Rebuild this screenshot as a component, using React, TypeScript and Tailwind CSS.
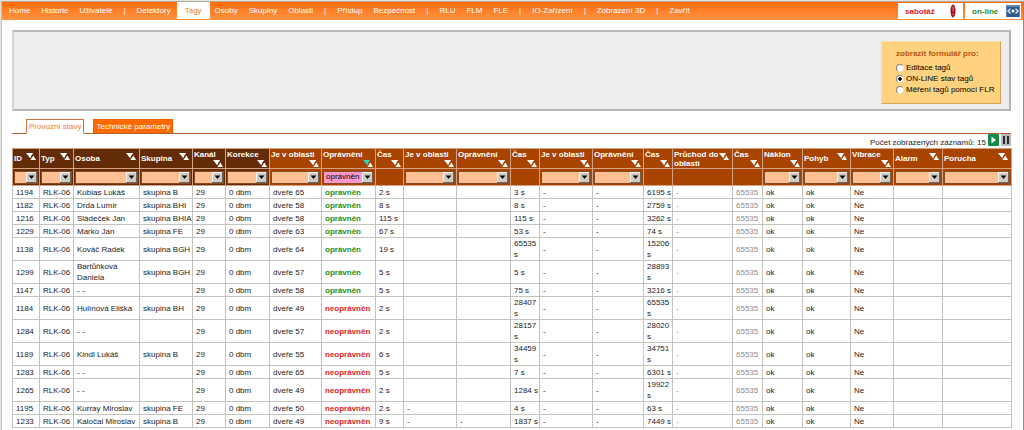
import React, { useState } from 'react';
import clsx from 'clsx';


type Column = {
  label: string;
  width: string;
  dark?: boolean;
  filter?: boolean;
  inline?: boolean;
  active?: boolean;
}

type MenuItem = {
  label: string;
  active?: boolean;
}


const menu: MenuItem[] = [
  { label: 'Home' },
  { label: 'Historie' },
  { label: 'Uživatelé' },
  { label: '|' },
  { label: 'Detektory' },
  { label: 'Tagy', active: true },
  { label: 'Osoby' },
  { label: 'Skupiny' },
  { label: 'Oblasti' },
  { label: '|' },
  { label: 'Přístup' },
  { label: 'Bezpečnost' },
  { label: '|' },
  { label: 'RLU' },
  { label: 'FLM' },
  { label: 'FLE' },
  { label: '|' },
  { label: 'IO-Zařízení' },
  { label: '|' },
  { label: 'Zobrazení 3D' },
  { label: '|' },
  { label: 'Zavřít' },
];


const columns: Column[] = [
  { label: 'ID', width: 'w-[27px]', dark: true, filter: true, inline: true },
  { label: 'Typ', width: 'w-[34px]', dark: true, filter: true, inline: true },
  { label: 'Osoba', width: 'w-[66px]', dark: true, filter: true, inline: true },
  { label: 'Skupina', width: 'w-[53px]', dark: true, filter: true, inline: true },
  { label: 'Kanál', width: 'w-[33px]', dark: true, filter: true },
  { label: 'Korekce', width: 'w-[44px]', dark: true, filter: true },
  { label: 'Je v oblasti', width: 'w-[52px]', filter: true },
  { label: 'Oprávnění', width: 'w-[54px]', filter: true, active: true },
  { label: 'Čas', width: 'w-[28px]' },
  { label: 'Je v oblasti', width: 'w-[53px]', filter: true },
  { label: 'Oprávnění', width: 'w-[54px]', filter: true },
  { label: 'Čas', width: 'w-[29px]' },
  { label: 'Je v oblasti', width: 'w-[53px]', filter: true },
  { label: 'Oprávnění', width: 'w-[51px]', filter: true },
  { label: 'Čas', width: 'w-[29px]' },
  { label: 'Průchod do oblasti', width: 'w-[60px]', inline: true },
  { label: 'Čas', width: 'w-[30px]' },
  { label: 'Náklon', width: 'w-[40px]', filter: true },
  { label: 'Pohyb', width: 'w-[48px]', filter: true, inline: true },
  { label: 'Vibrace', width: 'w-[43px]', filter: true },
  { label: 'Alarm', width: 'w-[49px]', filter: true, inline: true },
  { label: 'Porucha', width: 'w-[69px]', filter: true, inline: true },
];


// id, person, group, door, allowed, time 1, area 2, permission 2, time 2, time 3
type Tag = [string, string, string, string, boolean, string, string, string, string, string];

const tags: Tag[] = [
  ['1194', 'Kubias Lukáš', 'skupina B', 'dveře 65', true, '2 s', '', '', '3 s', '6195 s'],
  ['1182', 'Drda Lumír', 'skupina BHI', 'dveře 58', true, '8 s', '', '', '8 s', '2759 s'],
  ['1216', 'Sládeček Jan', 'skupina BHIA', 'dveře 58', true, '115 s', '', '', '115 s', '3262 s'],
  ['1229', 'Marko Jan', 'skupina FE', 'dveře 63', true, '67 s', '', '', '53 s', '74 s'],
  ['1138', 'Kováč Radek', 'skupina BGH', 'dveře 64', true, '19 s', '', '', '65535 s', '15206 s'],
  ['1299', 'Bartůňková Daniela', 'skupina BGH', 'dveře 57', true, '5 s', '', '', '5 s', '28893 s'],
  ['1147', '- -', '', 'dveře 58', true, '5 s', '', '', '75 s', '3216 s'],
  ['1184', 'Hulínová Eliška', 'skupina BH', 'dveře 49', false, '2 s', '', '', '28407 s', '65535 s'],
  ['1284', '- -', '', 'dveře 57', false, '2 s', '', '', '28157 s', '28020 s'],
  ['1189', 'Kindl Lukáš', 'skupina B', 'dveře 55', false, '6 s', '', '', '34459 s', '34751 s'],
  ['1283', '- -', '', 'dveře 65', false, '5 s', '', '', '7 s', '6301 s'],
  ['1265', '- -', '', 'dveře 49', false, '2 s', '', '', '1284 s', '19922 s'],
  ['1195', 'Kurray Miroslav', 'skupina FE', 'dveře 50', false, '2 s', '-', '', '4 s', '63 s'],
  ['1233', 'Kaločai Miroslav', 'skupina B', 'dveře 49', false, '9 s', '-', '-', '1837 s', '7449 s'],
];

const forms = ['Editace tagů', 'ON-LINE stav tagů', 'Měření tagů pomocí FLR'];


const toCells = ([id, person, group, door, allowed, time1, area2, perm2, time2, time3]: Tag) => [
  id, 'RLK-06', person, group, '29', '0 dbm', door, allowed ? 'oprávněn' : 'neoprávněn',
  time1, area2, perm2, time2, '-', '-', time3, '-', '65535', 'ok', 'ok', 'Ne', '', '',
];


const SortButton: React.FC<{ label: string; active?: boolean }> = ({ label, active }) => (
  <button type="button" aria-label={`Seřadit: ${label}`} className="shrink-0 self-center">
    <svg viewBox="0 0 10 7" className="block w-[10px] h-[7px]">
      <path d="M0 0h7.2L5.4 2.6 4.2 5.2z" fill={active ? '#35d0b8' : '#fff'} />
      <path d="M10 7H4.4l3-4.4z" fill="#fff" />
    </svg>
  </button>
);


const FilterSelect: React.FC<{ label: string; active?: boolean }> = ({ label, active }) => (
  <div className="grid">
    <select
      aria-label={`Filtr: ${label}`}
      defaultValue={active ? 'oprávněn' : ''}
      className={clsx(
        'col-start-1 row-start-1 w-full h-[13px] appearance-none border border-[#8a4a20] pl-[2px] text-[8px] leading-[10px] font-normal text-black',
        active ? 'bg-[#ff99cc]' : 'bg-[#ffbf94]'
      )}
    >
      <option value=""></option>
      {active && <option value="oprávněn">oprávněn</option>}
      {active && <option value="neoprávněn">neoprávněn</option>}
    </select>
    <svg viewBox="0 0 11 11" className="col-start-1 row-start-1 justify-self-end self-center mr-px w-[11px] h-[11px] pointer-events-none">
      <path d="M0 0h11v11H0z" fill="#6b6760" />
      <path d="M0 0h10v10H0z" fill="#f4f2ec" />
      <path d="M1 1h9v9H1z" fill="#d0ccc3" />
      <path d="M2.6 3.6h5.8L5.5 7z" fill="#000" />
    </svg>
  </div>
);


const TopBar: React.FC = () => (
  <header className="flex items-stretch justify-between h-[18px] bg-gradient-to-b from-[#ff6a00] to-[#ff9440]">
    <nav className="flex items-stretch pl-[2px]">
      {menu.map((item, i) =>
        item.label === '|' ? (
          <span key={i} className="pl-[5px] pr-[6px] leading-[17px] text-white">|</span>
        ) : (
          <a
            key={i}
            href="#"
            className={clsx(
              'leading-[17px] mb-px',
              item.active ? 'bg-white text-[#f47a1c] px-2' : 'text-white pl-[5px] pr-[6px]'
            )}
          >
            {item.label}
          </a>
        )
      )}
    </nav>
    <div className="flex gap-[2px] py-px pr-[2px] font-bold">
      <div className="flex items-center justify-between w-[65px] px-[7px] bg-white text-[#e0202c]">
        sabotáž
        <svg viewBox="0 0 6 14" className="w-[6px] h-[14px]">
          <ellipse cx="3" cy="7" rx="2.5" ry="6.5" fill="#a3121c" />
          <path d="M3 2.5v5M3 9.5v1.5" stroke="#e7888c" strokeWidth="1" />
        </svg>
      </div>
      <div className="flex items-center justify-between w-[56px] pl-[7px] pr-px bg-white text-[#1f8f2c]">
        on-line
        <svg viewBox="0 0 14 14" className="w-[14px] h-[14px]">
          <path d="M0 1h14v12H0z" fill="#5f86b4" />
          <path d="M1 3h12v10H1z" fill="#2f5a8c" />
          <path d="M4.5 4.8L2 7l2.5 2.4M9.5 4.8L12 7 9.500 9.400" fill="none" stroke="#dbe8f5" strokeWidth="1.4" />
          <circle cx="7" cy="7" r="1.500" fill="#fff" />
        </svg>
      </div>
    </div>
  </header>
);


const FormPicker: React.FC = () => {
  const [form, setForm] = useState(forms[1]);

  return (
    <section className="flex justify-end h-[81px] pt-[9px] pr-2 bg-[#ededed] border-2 border-t-[#b9b9bd] border-l-[#d5d5d5] border-r-[#b4b4b8] border-b-[#b4b4b8]">
      <fieldset className="w-[120px] h-[63px] pl-[14px] bg-[#ffd27f] border border-[#ffe0a6] border-r-[#d6a75a] border-b-[#d6a75a]">
        <legend className="float-left w-full pt-[7px] pb-[3px] leading-[10px] font-bold text-[#b8560f]">zobrazit formulář pro:</legend>
        {forms.map((name) => (
          <label key={name} className="clear-both flex items-center gap-[2px] h-[11px] text-black whitespace-nowrap">
            <input
              type="radio"
              name="form"
              checked={form === name}
              onChange={() => setForm(name)}
              className="appearance-none size-2 rounded-full bg-white border border-[#8a8376] border-r-[#e8e0d0] border-b-[#e8e0d0] checked:bg-[radial-gradient(circle,#000_35%,#fff_45%)]"
            />
            {name}
          </label>
        ))}
      </fieldset>
    </section>
  );
};


const Tabs: React.FC = () => (
  <div className="flex items-end gap-[9px] h-[15px] pl-[14px] mt-2 border-b border-b-[#b5622c]">
    <button type="button" className="h-[15px] px-[2px] pb-px -mb-px border border-[#c8763c] border-b-white bg-white text-[#f08030]">
      Provozní stavy
    </button>
    <button type="button" className="h-[14px] px-[2px] border border-b-0 border-[#e86000] bg-[#ff6a00] text-white">
      Technické parametry
    </button>
  </div>
);


const TagTable: React.FC = () => (
  <table className="w-full table-fixed border-collapse">
    <colgroup>
      {columns.map((col, i) => (
        <col key={i} className={col.width} />
      ))}
    </colgroup>
    <thead className="text-left font-bold text-white">
      <tr className="h-5">
        {columns.map((col, i) => (
          <th key={i} scope="col" className={clsx('p-0 border border-[#d3a184]', col.dark ? 'bg-[#632b06]' : 'bg-[#a84300]')}>
            <div className={clsx('flex justify-between h-[19px] pl-px', col.inline ? 'items-center pr-[3px]' : 'flex-col pt-px pr-[2px] pb-px')}>
              <span className="leading-[9px]">{col.label}</span>
              <div className={clsx('flex', col.inline ? 'pb-1' : 'justify-end')}>
                <SortButton label={col.label} active={col.active} />
              </div>
            </div>
          </th>
        ))}
      </tr>
      <tr className="h-[17px]">
        {columns.map((col, i) => (
          <td key={i} className={clsx('p-0 px-px border border-[#d3a184]', col.dark ? 'bg-[#632b06]' : 'bg-[#a84300]')}>
            {col.filter && <FilterSelect label={col.label} active={col.active} />}
          </td>
        ))}
      </tr>
    </thead>
    <tbody>
      {tags.map((tag) => (
        <tr key={tag[0]} className="h-[13px]">
          {toCells(tag).map((cell, i) => (
            <td
              key={i}
              className={clsx(
                'p-0 pl-[3px] align-middle border border-[#c4c4be]',
                i === 7 && 'font-bold',
                i === 7 && (tag[4] ? 'text-[#1c8f24]' : 'text-[#e01c28]'),
                (i === 15 || i === 16) && 'text-[#8c8c8c]'
              )}
            >
              {cell}
            </td>
          ))}
        </tr>
      ))}
    </tbody>
  </table>
);


export default function App() {
  return (
    <div className="min-h-screen pt-px pl-px bg-[#e4e2dc] font-['Liberation_Sans',Arial,sans-serif] text-[8px] leading-[11px] text-[#1c1c1c]">
      <div className="min-h-screen bg-white border-t border-l border-r border-t-[#b5aea0] border-l-[#c4c1b8] border-r-[#8c8c8c]">
        <TopBar />
        <main className="pt-[10px] pl-[10px] pr-3">
          <FormPicker />
          <Tabs />
          <div className="flex items-start justify-end gap-[2px] h-[14px]">
            <span className="self-end">Počet zobrazených záznamů: 15</span>
            <button type="button" aria-label="Spustit">
              <svg viewBox="0 0 11 12" className="block w-[11px] h-[12px]">
                <rect width="11" height="12" rx="1" fill="#128a48" />
                <path d="M3.5 2.5v7L8 6z" fill="#fff" />
              </svg>
            </button>
            <button type="button" aria-label="Pozastavit">
              <svg viewBox="0 0 10 12" className="block w-[10px] h-[12px]">
                <rect width="10" height="12" rx="1" fill="#b8b8b8" />
                <path d="M2 2h2v8H2zM6 2h2v8H6z" fill="#2c2c2c" />
              </svg>
            </button>
          </div>
          <TagTable />
        </main>
      </div>
    </div>
  );
}
